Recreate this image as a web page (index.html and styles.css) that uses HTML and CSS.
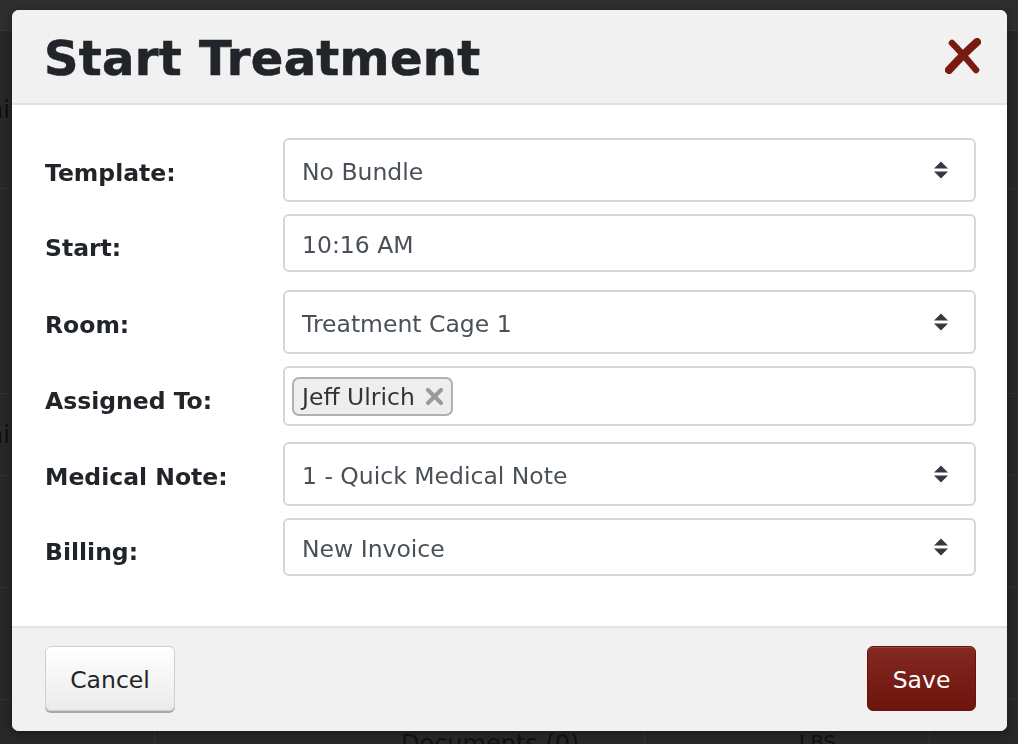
FILE: index.html
```html
<!DOCTYPE html>
<html lang="en">
<head>
<meta charset="utf-8">
<title>Start Treatment</title>
<link rel="stylesheet" href="styles.css">
</head>
<body>
<div class="page">
  <div class="bg-row bg-top"></div>
  <div class="bg-row r1"><span class="bg-text">hi</span></div>
  <div class="bg-row r2"></div>
  <div class="bg-row r3"><span class="bg-text">hi</span></div>
  <div class="bg-row r4"></div>
  <div class="bg-row r5"></div>
  <div class="bg-row bg-last">
    <div class="bg-cell c1"></div>
    <div class="bg-cell c2"><span class="bg-doc">Documents (0)</span></div>
    <div class="bg-cell c3"><span class="bg-doc small">LBS</span></div>
    <div class="bg-cell c4"></div>
  </div>
</div>

<div class="modal">
  <div class="modal-header">
    <h1 class="title">Start Treatment</h1>
    <button class="close" aria-label="Close">
      <svg width="36" height="36" viewBox="0 0 36 36">
        <path d="M7 5 C 13 11, 21 20, 31 32" stroke="#7a1b12" stroke-width="6.5" stroke-linecap="round" fill="none"/>
        <path d="M32 4 C 23 12, 14 21, 4 32" stroke="#7a1b12" stroke-width="8" stroke-linecap="round" fill="none"/>
      </svg>
    </button>
  </div>

  <div class="modal-body">
    <div class="row tall">
      <label class="lbl">Template:</label>
      <div class="field select"><span class="val">No Bundle</span>
        <svg class="arrows" width="16" height="18" viewBox="0 0 16 18"><path d="M1 7.5 L8 0.5 L15 7.5 Z M1 10.5 L15 10.5 L8 17.5 Z" fill="#343a40"/></svg>
      </div>
    </div>
    <div class="row short">
      <label class="lbl">Start:</label>
      <div class="field"><span class="val">10:16 AM</span></div>
    </div>
    <div class="row tall">
      <label class="lbl">Room:</label>
      <div class="field select"><span class="val">Treatment Cage 1</span>
        <svg class="arrows" width="16" height="18" viewBox="0 0 16 18"><path d="M1 7.5 L8 0.5 L15 7.5 Z M1 10.5 L15 10.5 L8 17.5 Z" fill="#343a40"/></svg>
      </div>
    </div>
    <div class="row mid">
      <label class="lbl">Assigned To:</label>
      <div class="field tags">
        <span class="chip">Jeff Ulrich
          <svg class="chip-x" width="19" height="19" viewBox="0 0 19 19"><path d="M3 3 L16 16 M16 3 L3 16" stroke="#9a9a9a" stroke-width="4.2" stroke-linecap="round"/></svg>
        </span>
      </div>
    </div>
    <div class="row tall">
      <label class="lbl">Medical Note:</label>
      <div class="field select"><span class="val">1 - Quick Medical Note</span>
        <svg class="arrows" width="16" height="18" viewBox="0 0 16 18"><path d="M1 7.5 L8 0.5 L15 7.5 Z M1 10.5 L15 10.5 L8 17.5 Z" fill="#343a40"/></svg>
      </div>
    </div>
    <div class="row short last">
      <label class="lbl">Billing:</label>
      <div class="field select"><span class="val">New Invoice</span>
        <svg class="arrows" width="16" height="18" viewBox="0 0 16 18"><path d="M1 7.5 L8 0.5 L15 7.5 Z M1 10.5 L15 10.5 L8 17.5 Z" fill="#343a40"/></svg>
      </div>
    </div>
  </div>

  <div class="modal-footer">
    <button class="btn cancel">Cancel</button>
    <button class="btn save">Save</button>
  </div>
</div>
</body>
</html>
```
FILE: styles.css
```css
* { box-sizing: border-box; }
html, body {
  margin: 0;
  height: 100%;
}
body {
  background: #282828;
  font-family: "DejaVu Sans", Verdana, sans-serif;
  overflow: hidden;
}

/* dimmed page behind the dialog */
.page {
  display: flex;
  flex-direction: column;
  height: 744px;
}
.bg-row {
  border-bottom: 1px solid #313131;
  display: flex;
  align-items: center;
  flex: none;
}
.bg-top {
  height: 31px;
  background: #2e2e2e;
  border-bottom: 1px solid #363636;
}
.r1 { height: 158px; }
.r2 { height: 205px; }
.r3 { height: 82px; }
.r4 { height: 112px; }
.r5 { height: 112px; }
.bg-text {
  font-size: 24px;
  color: #0e0e0e;
  margin-left: -12px;
}
.bg-last {
  flex: 1;
  border-bottom: none;
  align-items: stretch;
}
.bg-cell {
  border-right: 1px solid #333;
  padding-top: 30px;
}
.c1 { width: 155px; }
.c2 { width: 490px; padding-left: 246px; }
.c3 { width: 285px; padding-left: 154px; }
.c4 { flex: 1; border-right: none; }
.bg-doc {
  font-size: 24px;
  color: #111;
  white-space: nowrap;
}
.bg-doc.small { font-size: 20px; }

/* dialog */
.modal {
  position: fixed;
  left: 12px;
  top: 10px;
  width: 995px;
  height: 721px;
  border-radius: 7px;
  overflow: hidden;
  background: #fff;
  display: flex;
  flex-direction: column;
  box-shadow: 0 2px 10px rgba(0,0,0,0.4);
}
.modal-header {
  height: 95px;
  background: #f1f1f1;
  border-bottom: 2px solid #dfe2e6;
  display: flex;
  align-items: center;
  justify-content: space-between;
  padding: 0 25px 0 32px;
}
.title {
  margin: 0;
  font-size: 48px;
  font-weight: bold;
  color: #212529;
  letter-spacing: 0.3px;
  padding-top: 2px;
  -webkit-text-stroke: 0.6px #212529;
}
.close {
  border: 0;
  background: none;
  padding: 0;
  width: 38px;
  height: 38px;
  display: flex;
  align-items: center;
  justify-content: center;
  margin-bottom: 2px;
  filter: blur(0.5px);
}

.modal-body {
  flex: 1;
  padding: 33px 31px 0 33px;
}
.row {
  display: flex;
  align-items: flex-start;
  height: 64px;
  margin-bottom: 12px;
  --h: 64px;
}
.row.short { --h: 58px; }
.row.mid { --h: 60px; }
.lbl {
  width: 238px;
  flex: none;
  line-height: var(--h);
  padding-top: 3px;
  font-size: 23.5px;
  font-weight: bold;
  color: #212529;
}
.row.short .lbl, .row.mid .lbl { padding-top: 5px; }
.field {
  flex: 1;
  height: var(--h);
  border: 2px solid #d4d7db;
  border-radius: 6px;
  display: flex;
  align-items: center;
  justify-content: space-between;
  padding: 0 25px 0 17px;
  font-size: 23.5px;
  color: #495057;
}
.val { padding-top: 3px; }
.arrows { flex: none; }
.field.tags { padding: 0 7px; }
.chip {
  display: inline-flex;
  align-items: center;
  height: 39px;
  padding: 2px 7px 0 8px;
  background: #eeeeee;
  border: 2px solid #b0b0b0;
  border-radius: 7px;
  color: #333;
  font-size: 23.5px;
  gap: 10px;
}
.chip-x { margin-top: -1px; }

.modal-footer {
  height: 105px;
  background: #f1f1f1;
  border-top: 2px solid #dfe2e6;
  display: flex;
  align-items: flex-start;
  justify-content: space-between;
  padding: 18px 31px 0 33px;
}
.btn {
  font-family: "DejaVu Sans", Verdana, sans-serif;
  font-size: 23.5px;
  height: 65px;
  border-radius: 6px;
  cursor: pointer;
  padding-top: 3px;
}
.cancel {
  width: 130px;
  color: #212529;
  background: linear-gradient(#ffffff, #ebebeb);
  border: 1px solid #cfcfcf;
  box-shadow: 0 2px 0 #a9a9a9;
}
.save {
  width: 109px;
  color: #fff;
  background: linear-gradient(#842822, #6d140c);
  border: 1px solid #6a130c;
  box-shadow: inset 0 1px 0 rgba(255,255,255,0.12);
}
```
